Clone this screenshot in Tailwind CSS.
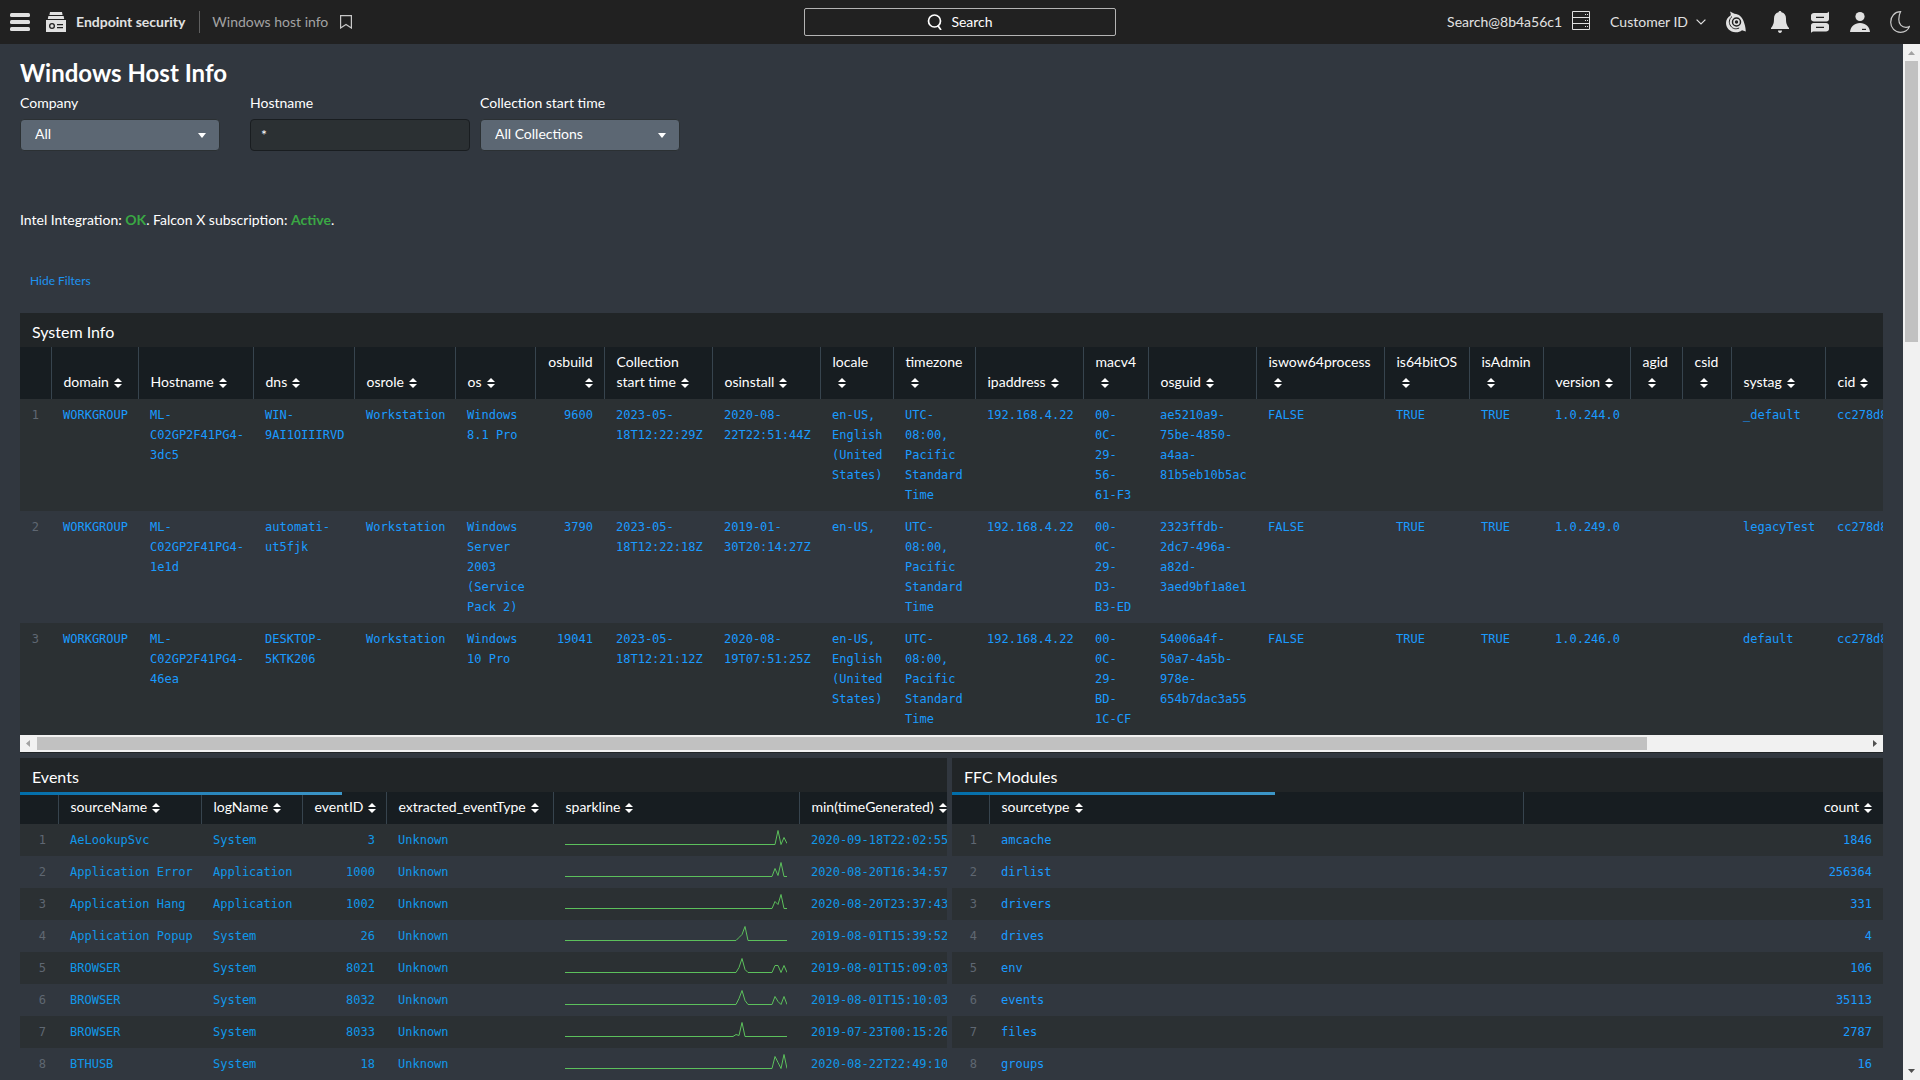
<!DOCTYPE html>
<html lang="en">
<head>
  <meta charset="utf-8">
  <meta name="viewport" content="width=device-width, initial-scale=1">
  <title>Windows Host Info</title>
  <script src="https://cdn.jsdelivr.net/npm/@tailwindcss/browser@4"></script>
</head>
<body class="flex h-screen flex-col overflow-hidden bg-[#31373f] font-['Lato','Liberation_Sans',sans-serif] text-sm leading-5 text-white">

  <!-- Top bar -->
  <header class="flex h-11 shrink-0 items-center bg-[#212121] text-[#e1e1e1]">
    <div class="flex flex-1 items-center pl-[10px]">
      <button type="button" aria-label="Menu" class="mr-4">
        <svg class="size-5" viewBox="0 0 20 20" fill="currentColor">
          <rect y="1" width="20" height="4" rx="1.5"/>
          <rect y="8" width="20" height="4" rx="1.5"/>
          <rect y="15" width="20" height="4" rx="1.5"/>
        </svg>
      </button>
      <svg class="mr-[10px] size-5" viewBox="0 0 20 20" fill="currentColor">
        <path d="M4 0h12l.6 3H3.400z"/>
        <path d="M2.400 4h15.200l.6 3H1.800z"/>
        <path fill-rule="evenodd" d="M0 8h20v12H0zM6 11a3 3 0 1 0 0 6 3 3 0 0 0 0-6zm0 1.300a1.700 1.700 0 1 1 0 3.400 1.700 1.700 0 0 1 0-3.400zM11 12v1.200h6V12zm0 3v1.200h6V15z"/>
      </svg>
      <a href="#" class="font-bold">Endpoint security</a>
      <span class="mr-3 ml-[14px] h-[22px] w-px bg-[#5f5f5f]"></span>
      <a href="#" class="text-[#a3a3a3]">Windows host info</a>
      <button type="button" aria-label="Bookmark" class="ml-3">
        <svg class="h-[14px] w-3" viewBox="0 0 12 14" fill="none" stroke="#c8c8c8" stroke-width="1.200">
          <path d="M.6.6h10.800v12.400L6 9.400.6 13z"/>
        </svg>
      </button>
    </div>

    <button type="button" class="flex h-7 w-[312px] items-center justify-center gap-2 rounded-xs border border-[#b4b4b4] text-white">
      <svg class="size-4" viewBox="0 0 16 16" fill="none" stroke="currentColor" stroke-width="1.700">
        <circle cx="7.500" cy="7" r="6"/>
        <path d="M10.800 11.500 14 16"/>
      </svg>
      Search
    </button>

    <div class="flex flex-1 items-center justify-end gap-5 pr-[10px]">
      <div class="flex items-center gap-[10px]">
        Search@8b4a56c1
        <svg class="h-[22px] w-[18px]" viewBox="0 0 18 22" fill="none" stroke="currentColor">
          <path d="M.5.5h17v18H.5zM.5 6.500h17M.5 12.500h17M13 3.500h1m1 0h1M13 9.500h1m1 0h1M13 15.500h1m1 0h1"/>
        </svg>
      </div>
      <button type="button" class="flex items-center gap-2">
        Customer ID
        <svg class="h-[6px] w-[10px]" viewBox="0 0 10 6" fill="none" stroke="currentColor" stroke-width="1.200"><path d="M.6.6 5 5 9.400.6"/></svg>
      </button>
      <button type="button" aria-label="Falcon" class="mr-1">
        <svg class="h-[22px] w-5" viewBox="0 0 20 22">
          <path fill="#e1e1e1" d="M4 .5 8.500 2.800C13 3 16 6 17.500 10c1 3 2.100 5.500 2.300 10.500L16 19.300c-2 1.500-4.200 2.200-6.500 2C4 21 0 17 0 12c0-3 1.500-6 4.500-7.500L4.800 3z"/>
          <path fill="none" stroke="#212121" d="M6 5.500C3 8 2.500 12 4.700 15c2 2.800 5 3.500 8.500 2"/>
          <circle cx="10.500" cy="11" r="4" fill="#e1e1e1" stroke="#212121" stroke-width="1.500"/>
          <circle cx="10.500" cy="11" r="1.700" fill="#212121"/>
        </svg>
      </button>
      <button type="button" aria-label="Notifications">
        <svg class="h-[22px] w-5" viewBox="0 0 20 22" fill="currentColor">
          <path d="M10 0c.8 0 1.300.5 1.500 1.300C14.500 2 16 4.500 16 7.500c0 4.500.6 6.500 3 9.500v1H1v-1c2.400-3 3-5 3-9.500C4 4.500 5.500 2 8.500 1.300 8.700.5 9.200 0 10 0z"/>
          <path d="M8 19.500h4c0 1.500-.8 2.500-2 2.500s-2-1-2-2.500z"/>
        </svg>
      </button>
      <button type="button" aria-label="Messages">
        <svg class="h-[22px] w-5" viewBox="0 0 20 22">
          <path fill="#e1e1e1" d="M4 2h11.500c1.500 0 2.800-.5 3.500-1.500V8c0 1.500-1 2.500-2.500 2.500H4C2.300 10.500 1 9.500 1 8V4.500C1 3 2.300 2 4 2z"/>
          <path fill="#e1e1e1" d="M3.500 12H16c1.700 0 3 1 3 2.500V18c0 1.500-1.300 2.500-3 2.500H4.500c-1.500 0-2.800.3-3.500 1.500v-7.500C1 13 2 12 3.500 12z"/>
          <path stroke="#212121" stroke-width="1.200" d="M6 6.300h8M6 16.300h8"/>
        </svg>
      </button>
      <button type="button" aria-label="Account">
        <svg class="h-[22px] w-5" viewBox="0 0 20 22">
          <circle cx="10" cy="5.500" r="4.600" fill="#e1e1e1"/>
          <path fill="#e1e1e1" d="M0 21c.5-5.500 4.500-9 10-9s9.500 3.500 10 9z"/>
          <path stroke="#212121" stroke-width="1.200" d="M12 18.400h4"/>
        </svg>
      </button>
      <button type="button" aria-label="Dark mode">
        <svg class="h-[22px] w-5" viewBox="0 0 20 22" fill="none" stroke="#c8c8c8" stroke-width="1.200">
          <path d="M10.500.7C4.800.8.700 5.300.700 11.200c0 5.600 4.300 10.100 9.800 10.100 4.200 0 7.700-2.300 9-5.800-1.200.6-2.300.8-3.500.8-4.400 0-7.200-3.300-7.200-7.800 0-3 .5-5.500 1.700-7.800z"/>
        </svg>
      </button>
    </div>
  </header>

  <div class="flex min-h-0 flex-1">
    <main class="min-w-0 flex-1 overflow-hidden pr-5 pl-5">
      <h1 class="pt-4 text-2xl leading-[26px] font-bold">Windows Host Info</h1>

      <form class="mt-[7px] flex">
        <div class="w-[230px]">
          <label for="company" class="block">Company</label>
          <div class="relative mt-[6px] w-[200px]">
            <select id="company" class="h-8 w-full appearance-none rounded-sm border border-[#2b3033] bg-[#5c6773] pb-[2px] pl-[14px]"><option>All</option></select>
            <svg class="pointer-events-none absolute top-[14px] right-[14px] h-[5px] w-2" viewBox="0 0 8 5" fill="currentColor"><path d="M0 0h8L4 5z"/></svg>
          </div>
        </div>
        <div class="w-[230px]">
          <label for="hostname" class="block">Hostname</label>
          <input id="hostname" type="text" value="*" class="mt-[6px] h-8 w-[220px] rounded-sm border border-[#191d20] bg-[#2b3033] px-[10px] pb-[2px]">
        </div>
        <div class="w-[230px]">
          <label for="collection" class="block">Collection start time</label>
          <div class="relative mt-[6px] w-[200px]">
            <select id="collection" class="h-8 w-full appearance-none rounded-sm border border-[#2b3033] bg-[#5c6773] pb-[2px] pl-[14px]"><option>All Collections</option></select>
            <svg class="pointer-events-none absolute top-[14px] right-[14px] h-[5px] w-2" viewBox="0 0 8 5" fill="currentColor"><path d="M0 0h8L4 5z"/></svg>
          </div>
        </div>
      </form>

      <p class="mt-[59px]">Intel Integration: <b class="text-[#3aa844]">OK</b>. Falcon X subscription: <b class="text-[#3aa844]">Active</b>.</p>
      <a href="#" class="mt-[41px] ml-[10px] block w-fit text-xs leading-5 text-[#1e93f0]">Hide Filters</a>

      <section class="mt-[22px] border-b border-[#212527] bg-[#212527]">
        <h2 class="h-[34px] pt-[9px] pl-3 text-base leading-5">System Info</h2>
        <div class="overflow-hidden">
          <table id="system" class="w-[2120px] table-fixed text-left">
            <colgroup></colgroup>
            <thead class="bg-[#171d21] align-bottom"></thead>
            <tbody class="align-top font-['DejaVu_Sans_Mono',monospace] text-xs leading-5 whitespace-pre text-[#1a9bff]"></tbody>
          </table>
        </div>
        <!-- Horizontal scrollbar -->
        <div class="flex h-[17px] items-center bg-[#f1f1f1]">
          <svg class="h-[17px] w-[17px] shrink-0" viewBox="0 0 17 17" fill="#a3a3a3"><path d="M10 5v7L6 8.500z"/></svg>
          <div class="min-w-0 flex-1"><div class="h-[13px] w-[88%] bg-[#c1c1c1]"></div></div>
          <svg class="h-[17px] w-[17px] shrink-0" viewBox="0 0 17 17" fill="#505050"><path d="M7 5v7l4-3.500z"/></svg>
        </div>
      </section>

      <div class="mt-[5px] grid grid-cols-[927fr_931fr] gap-[5px]">
        <section class="min-w-0 overflow-hidden">
          <h2 class="h-[34px] bg-[#212527] pt-[9px] pl-3 text-base leading-5">Events</h2>
          <div class="relative">
            <div class="absolute top-0 left-0 h-[3px] w-[322px] bg-linear-to-r from-[#006eaa] to-[#3c96c8]"></div>
            <table id="events" class="w-[1100px] table-fixed text-left">
              <colgroup></colgroup>
              <thead class="bg-[#171d21] align-bottom"></thead>
              <tbody class="align-top font-['DejaVu_Sans_Mono',monospace] text-xs leading-5 whitespace-pre text-[#1098ea]"></tbody>
            </table>
          </div>
        </section>
        <section class="min-w-0 overflow-hidden">
          <h2 class="h-[34px] bg-[#212527] pt-[9px] pl-3 text-base leading-5">FFC Modules</h2>
          <div class="relative">
            <div class="absolute top-0 left-0 h-[3px] w-[323px] bg-linear-to-r from-[#006eaa] to-[#3c96c8]"></div>
            <table id="modules" class="w-full table-fixed text-left">
              <colgroup></colgroup>
              <thead class="bg-[#171d21] align-bottom"></thead>
              <tbody class="align-top font-['DejaVu_Sans_Mono',monospace] text-xs leading-5 whitespace-pre text-[#1a9bff]"></tbody>
            </table>
          </div>
        </section>
      </div>
    </main>

    <!-- Page scrollbar -->
    <div class="flex w-[17px] shrink-0 flex-col items-center bg-[#f1f1f1]">
      <svg class="size-[17px] shrink-0" viewBox="0 0 17 17" fill="#a3a3a3"><path d="M5 11h7L8.500 7z"/></svg>
      <div class="w-[13px] flex-1"><div class="h-[28%] bg-[#c1c1c1]"></div></div>
      <svg class="size-[17px] shrink-0" viewBox="0 0 17 17" fill="#505050"><path d="M5 6h7l-3.500 4z"/></svg>
    </div>
  </div>

  <script>
    const sortIcon = '<svg class="ml-[5px] inline-block h-[10px] w-2 align-[-1px]" viewBox="0 0 8 10" fill="currentColor"><path d="M0 4h8L4 0zM0 6h8l-4 4z"/></svg>';

    // heights of a sparkline's last points, by step; all the others are zero
    function sparkline(points) {
      let line = '';
      for (let i = 0; i <= 74; i++) line += `${i * 3},${15.5 - (points[i] || 0)} `;
      return `<svg class="mt-[-1px] h-4 w-[222px]" viewBox="0 0 222 16" fill="none" stroke="#5cc05c"><polyline points="${line}"/></svg>`;
    }

    // columns: [label, width, right aligned]
    function fill(id, columns, rows) {
      const table = document.getElementById(id);
      table.querySelector('colgroup').innerHTML = columns.map(c => `<col style="${c[1] ? `width:${c[1]}px` : ''}">`).join('');
      table.querySelector('thead').innerHTML = '<tr>' + columns.map(c => c[0]
        ? `<th class="border-l border-[#37444e] pt-[5px] pb-[7px] pl-3 font-normal whitespace-pre ${c[2] ? 'text-right pr-[11px]' : 'pr-1'}">${c[0]}${sortIcon}</th>`
        : '<td></td>').join('') + '</tr>';
      table.querySelector('tbody').innerHTML = rows.map((row, n) =>
        `<tr class="odd:bg-[#2b3033] even:bg-[#31373f]"><td class="py-[6px] pr-3 text-right text-[#5f6772]">${n + 1}</td>` +
        row.map((v, i) => `<td class="py-[6px] pl-3 ${columns[i + 1][2] ? 'text-right pr-[11px]' : ''}">${typeof v === 'object' ? sparkline(v) : v}</td>`).join('') +
        '</tr>').join('');
    }

    fill('system', [
      ['', 31], ['domain', 87], ['Hostname', 115], ['dns', 101], ['osrole', 101], ['os', 80], ['osbuild\n', 69, true],
      ['Collection\nstart time', 108], ['osinstall', 108], ['locale\n', 73], ['timezone\n', 82], ['ipaddress', 108],
      ['macv4\n', 65], ['osguid', 108], ['iswow64process\n', 128], ['is64bitOS\n', 85], ['isAdmin\n', 74], ['version', 87],
      ['agid\n', 52], ['csid\n', 49], ['systag', 94], ['cid']
    ], [
      ['WORKGROUP', 'ML-\nC02GP2F41PG4-\n3dc5', 'WIN-\n9AI1OIIIRVD', 'Workstation', 'Windows\n8.1 Pro', '9600',
        '2023-05-\n18T12:22:29Z', '2020-08-\n22T22:51:44Z', 'en-US,\nEnglish\n(United\nStates)', 'UTC-\n08:00,\nPacific\nStandard\nTime',
        '192.168.4.22', '00-\n0C-\n29-\n56-\n61-F3', 'ae5210a9-\n75be-4850-\na4aa-\n81b5eb10b5ac', 'FALSE', 'TRUE', 'TRUE', '1.0.244.0', '', '', '_default', 'cc278d8'],
      ['WORKGROUP', 'ML-\nC02GP2F41PG4-\n1e1d', 'automati-\nut5fjk', 'Workstation', 'Windows\nServer\n2003\n(Service\nPack 2)', '3790',
        '2023-05-\n18T12:22:18Z', '2019-01-\n30T20:14:27Z', 'en-US,', 'UTC-\n08:00,\nPacific\nStandard\nTime',
        '192.168.4.22', '00-\n0C-\n29-\nD3-\nB3-ED', '2323ffdb-\n2dc7-496a-\na82d-\n3aed9bf1a8e1', 'FALSE', 'TRUE', 'TRUE', '1.0.249.0', '', '', 'legacyTest', 'cc278d8'],
      ['WORKGROUP', 'ML-\nC02GP2F41PG4-\n46ea', 'DESKTOP-\n5KTK206', 'Workstation', 'Windows\n10 Pro', '19041',
        '2023-05-\n18T12:21:12Z', '2020-08-\n19T07:51:25Z', 'en-US,\nEnglish\n(United\nStates)', 'UTC-\n08:00,\nPacific\nStandard\nTime',
        '192.168.4.22', '00-\n0C-\n29-\nBD-\n1C-CF', '54006a4f-\n50a7-4a5b-\n978e-\n654b7dac3a55', 'FALSE', 'TRUE', 'TRUE', '1.0.246.0', '', '', 'default', 'cc278d8']
    ]);

    fill('events', [
      ['', 38], ['sourceName', 143], ['logName', 101], ['eventID', 84, true], ['extracted_eventType', 167], ['sparkline', 246], ['min(timeGenerated)']
    ], [
      ['AeLookupSvc', 'System', '3', 'Unknown', {71: 14, 73: 7, 74: 1}, '2020-09-18T22:02:55.'],
      ['Application Error', 'Application', '1000', 'Unknown', {70: 8, 71: 1, 72: 14}, '2020-08-20T16:34:57.'],
      ['Application Hang', 'Application', '1002', 'Unknown', {70: 7, 71: 4, 72: 14}, '2020-08-20T23:37:43.'],
      ['Application Popup', 'System', '26', 'Unknown', {58: 3, 59: 6, 60: 14}, '2019-08-01T15:39:52.'],
      ['BROWSER', 'System', '8021', 'Unknown', {58: 5, 59: 14, 60: 3, 70: 7, 71: 7, 73: 7}, '2019-08-01T15:09:03.'],
      ['BROWSER', 'System', '8032', 'Unknown', {58: 6, 59: 14, 60: 4, 70: 8, 71: 3, 73: 8}, '2019-08-01T15:10:03.'],
      ['BROWSER', 'System', '8033', 'Unknown', {57: 2, 58: 1, 59: 14}, '2019-07-23T00:15:26.'],
      ['BTHUSB', 'System', '18', 'Unknown', {70: 12, 71: 6, 73: 14}, '2020-08-22T22:49:10.']
    ]);

    fill('modules', [['', 37], ['sourcetype', 534], ['count', 0, true]], [
      ['amcache', '1846'], ['dirlist', '256364'], ['drivers', '331'], ['drives', '4'],
      ['env', '106'], ['events', '35113'], ['files', '2787'], ['groups', '16']
    ]);
  </script>
</body>
</html>
